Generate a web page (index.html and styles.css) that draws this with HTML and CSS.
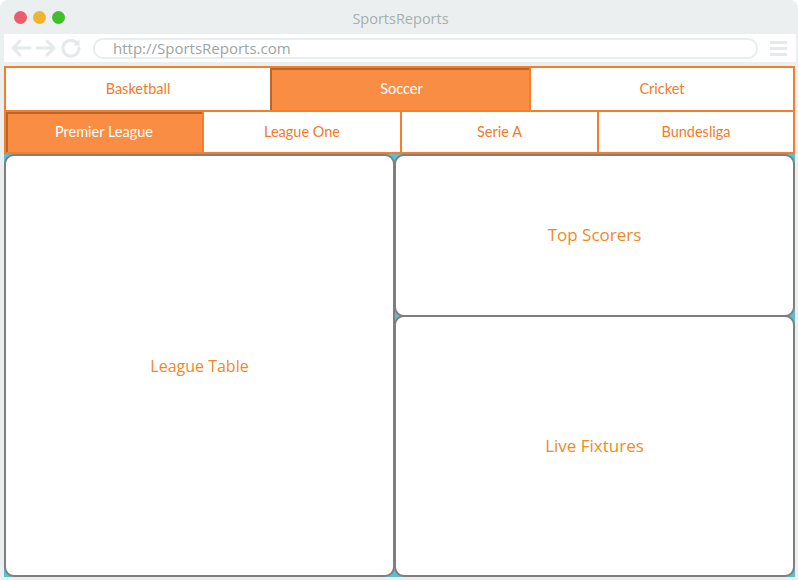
FILE: index.html
```html
<!DOCTYPE html>
<html>
<head>
<meta charset="utf-8">
<link rel="stylesheet" href="styles.css">
</head>
<body>
<div class="window">
  <div class="titlebar">
    <div class="dots">
      <span class="dot red"></span>
      <span class="dot yellow"></span>
      <span class="dot green"></span>
    </div>
    <div class="title">SportsReports</div>
  </div>
  <div class="toolbar">
    <div class="navicons">
      <svg width="22" height="20" viewBox="0 0 22 20"><path d="M20 10H3M10 3L3 10l7 7" fill="none" stroke="#e4e9e9" stroke-width="3" stroke-linecap="round" stroke-linejoin="round"/></svg>
      <svg width="22" height="20" viewBox="0 0 22 20"><path d="M2 10h17M12 3l7 7-7 7" fill="none" stroke="#e4e9e9" stroke-width="3" stroke-linecap="round" stroke-linejoin="round"/></svg>
      <svg width="22" height="22" viewBox="0 0 22 22"><path d="M17.5 6.5A8 8 0 1 0 19 11" fill="none" stroke="#e4e9e9" stroke-width="3" stroke-linecap="round"/><path d="M19.5 2.5v6h-6z" fill="#e4e9e9"/></svg>
    </div>
    <div class="urlbar">http://SportsReports.com</div>
    <div class="menu"><span></span><span></span><span></span></div>
  </div>
  <div class="content">
    <div class="tabs tabs-top">
      <div class="tab">Basketball</div>
      <div class="tab active">Soccer</div>
      <div class="tab">Cricket</div>
    </div>
    <div class="tabs tabs-sub">
      <div class="tab active">Premier League</div>
      <div class="tab">League One</div>
      <div class="tab">Serie A</div>
      <div class="tab">Bundesliga</div>
    </div>
    <div class="panels">
      <div class="panel panel-table">League Table</div>
      <div class="panel panel-scorers">Top Scorers</div>
      <div class="panel panel-fixtures">Live Fixtures</div>
    </div>
  </div>
</div>
</body>
</html>
```
FILE: styles.css
```css
* { box-sizing: border-box; }
html, body { margin: 0; padding: 0; background: #ffffff; }
body { width: 798px; height: 580px; overflow: hidden; font-family: "Lato", "Open Sans", sans-serif; }

.window {
  width: 798px;
  height: 580px;
  background: #eceff0;
  border-radius: 8px 8px 0 0;
  padding: 0 3px 3px 4px;
  display: flex;
  flex-direction: column;
}

.titlebar {
  height: 34px;
  position: relative;
  display: flex;
  align-items: center;
  justify-content: center;
  padding-top: 2px;
}
.dots {
  position: absolute;
  left: 10px;
  top: 11px;
  display: flex;
  gap: 6px;
}
.dot { width: 13px; height: 13px; border-radius: 50%; display: block; }
.red { background: #ee5d6b; }
.yellow { background: #efb530; }
.green { background: #3ec02b; }
.title {
  font-family: "Open Sans", sans-serif;
  font-size: 14.5px;
  color: #a4afaf;
  padding-left: 2px;
}

.toolbar {
  height: 28px;
  background: #ffffff;
  display: flex;
  align-items: center;
  margin: 0 -1px 0 0;
}
.navicons {
  display: flex;
  align-items: center;
  gap: 3px;
  padding-left: 6px;
  width: 89px;
}
.navicons svg { display: block; }
.urlbar {
  width: 665px;
  height: 21px;
  border: 2px solid #e8eded;
  border-radius: 10px;
  font-family: "Open Sans", sans-serif;
  font-size: 15px;
  line-height: 16px;
  color: #9aa6a6;
  padding-left: 18px;
}
.menu {
  margin-left: 12px;
  display: flex;
  flex-direction: column;
  gap: 3px;
}
.menu span { display: block; width: 17px; height: 3px; background: #e4e9e9; }

.content {
  margin-top: 4px;
  flex: 1;
  display: flex;
  flex-direction: column;
  background: #5bbfcf;
}

.tabs {
  display: grid;
  gap: 2px;
  background: #f47e2c;
  padding: 2px;
}
.tabs-top { grid-template-columns: 264px 257px 1fr; padding-bottom: 0; height: 44px; }
.tabs-sub { grid-template-columns: 196px 196px 195px 1fr; height: 44px; }
.tab {
  background: #ffffff;
  color: #f27b2b;
  font-size: 14.5px;
  display: flex;
  align-items: center;
  justify-content: center;
  padding-bottom: 1px;
}
.tab.active {
  background: #f98d44;
  color: #ffffff;
  box-shadow: inset 2px 2px 0 #b8662a;
}
.tabs-top .tab.active { margin-left: -2px; padding-left: 4px; }

.panels {
  flex: 1;
  display: grid;
  grid-template-columns: 391px 1fr;
  grid-template-rows: 163px 1fr;
}
.panel {
  background: #ffffff;
  border: 2px solid #7f7f7f;
  border-radius: 10px;
  display: flex;
  align-items: center;
  justify-content: center;
  font-family: "Open Sans", sans-serif;
  font-size: 17px;
  color: #f1891f;
}
.panel-table { grid-row: 1 / 3; font-size: 16px; }
.panel-scorers { margin-left: -1px; padding-bottom: 2px; }
.panel-fixtures { margin-left: -1px; margin-top: -2px; padding-bottom: 2px; }
```
